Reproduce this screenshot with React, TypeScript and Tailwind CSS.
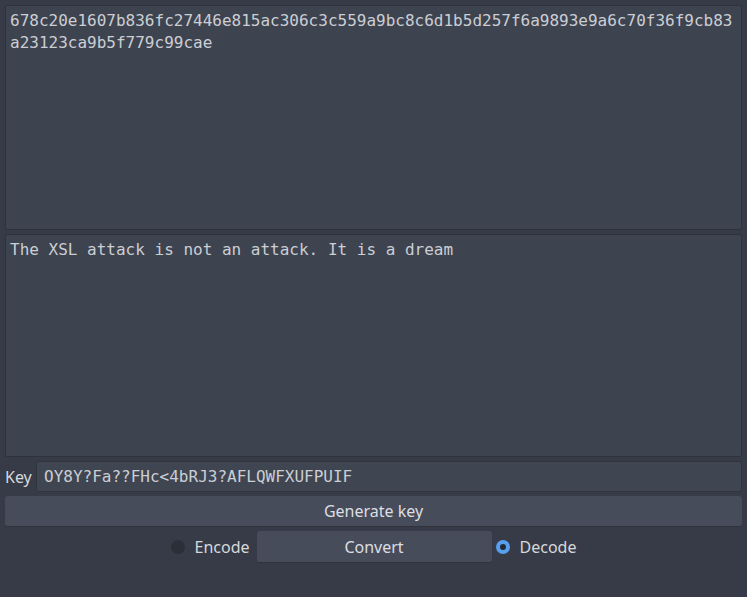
const hash =
  "678c20e1607b836fc27446e815ac306c3c559a9bc8c6d1b5d257f6a9893e9a6c70f36f9cb83a23123ca9b5f779c99cae";

function Radio({ checked, label }: { checked: boolean; label: string }) {
  return (
    <div className="flex items-center">
      {checked ? (
        <span className="flex h-[14px] w-[14px] items-center justify-center rounded-full bg-[#57a0ef]">
          <span className="h-[6px] w-[6px] rounded-full bg-[#262a32]" />
        </span>
      ) : (
        <span className="h-[14px] w-[14px] rounded-full bg-[#2b2f38]" />
      )}
      <span className="ml-[10px] text-[16px] leading-none text-[#d6d8dc]">{label}</span>
    </div>
  );
}

export default function App() {
  return (
    <div className="h-[597px] w-[747px] overflow-hidden bg-[#363b47] p-[5px] font-['Noto_Sans',sans-serif]">
      <div className="flex flex-col">
        <div className="h-[225px] whitespace-pre-wrap break-all rounded-[2px] border border-[#2e323b] bg-[#3e4350] pl-[4px] pr-[4px] pt-[4px] font-['DejaVu_Sans_Mono',monospace] text-[16px] leading-[22px] text-[#cbced3]">
          {hash}
        </div>
        <div className="mt-[4px] h-[223px] whitespace-pre-wrap break-all rounded-[2px] border border-[#2e323b] bg-[#3e4350] pl-[4px] pr-[4px] pt-[4px] font-['DejaVu_Sans_Mono',monospace] text-[16px] leading-[22px] text-[#cbced3]">
          The XSL attack is not an attack. It is a dream
        </div>
        <div className="mt-[4px] flex h-[31px] items-center">
          <span className="w-[31px] text-[16px] text-[#d6d8dc]">Key</span>
          <div className="flex h-[31px] flex-1 items-center rounded-[3px] border border-[#30343d] bg-[#404552] pl-[7px] font-['DejaVu_Sans_Mono',monospace] text-[16px] text-[#cbced3]">
            OY8Y?Fa??FHc&lt;4bRJ3?AFLQWFXUFPUIF
          </div>
        </div>
        <button className="mt-[4px] h-[31px] w-full rounded-[3px] border-b border-[#2f333c] bg-[#474c5a] text-[16px] text-[#dcdee2]">
          Generate key
        </button>
        <div className="mt-[4px] flex h-[32px] items-center justify-center">
          <Radio checked={false} label="Encode" />
          <button className="ml-[7px] h-[32px] w-[235px] rounded-[3px] border-b border-[#2f333c] bg-[#474c5a] text-[16px] text-[#dcdee2]">
            Convert
          </button>
          <div className="ml-[4px]">
            <Radio checked={true} label="Decode" />
          </div>
        </div>
      </div>
    </div>
  );
}
